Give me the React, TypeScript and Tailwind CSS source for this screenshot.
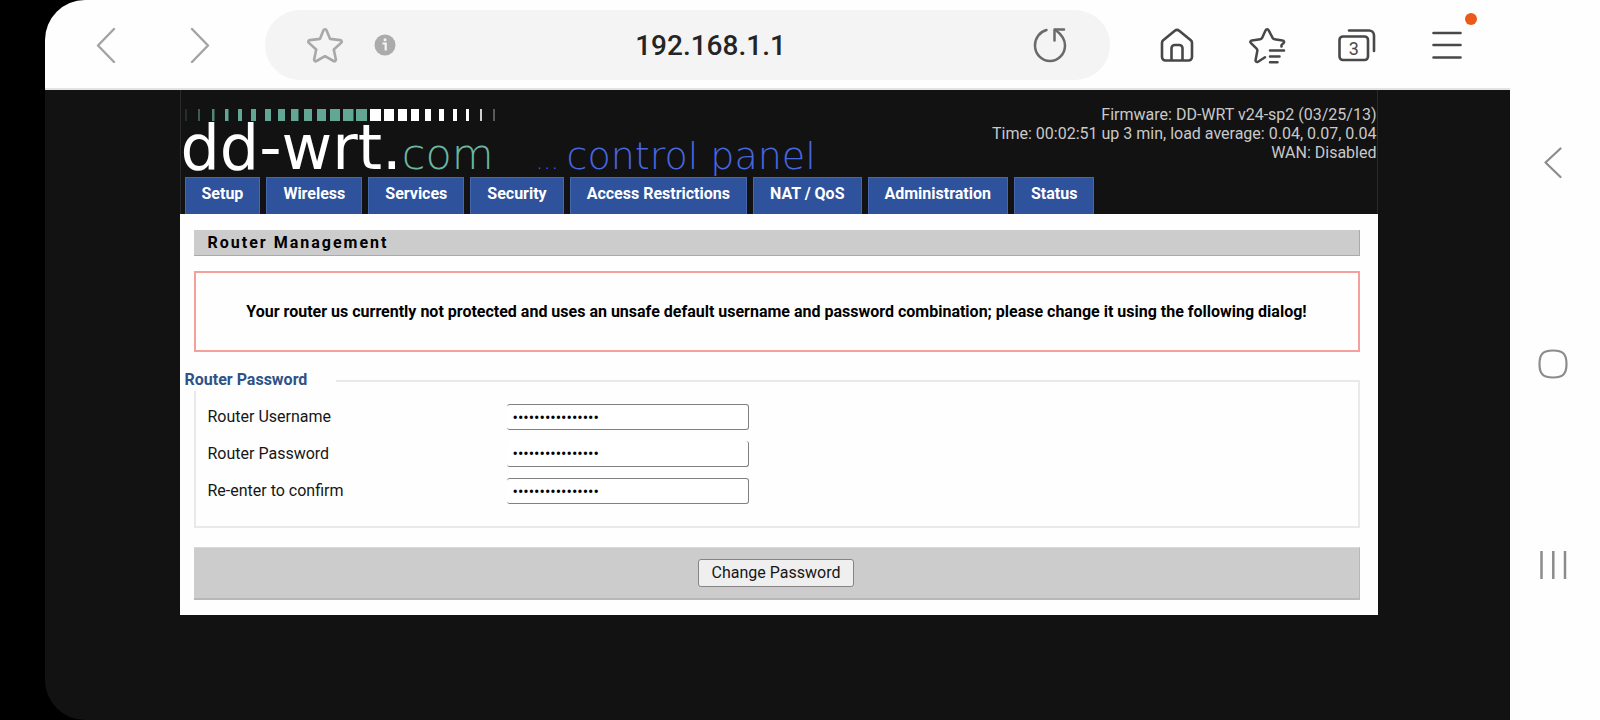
const TABS = [
  "Setup",
  "Wireless",
  "Services",
  "Security",
  "Access Restrictions",
  "NAT / QoS",
  "Administration",
  "Status",
];

const FIELDS = [
  { id: "router-username", label: "Router Username", border: "border-y border-r" },
  { id: "router-password", label: "Router Password", border: "border-b border-r" },
  { id: "router-confirm", label: "Re-enter to confirm", border: "border-y border-r" },
];

const TICKS = [
  { x: 0.5, w: 1, o: 0.4 },
  { x: 13, w: 2, o: 0.5 },
  { x: 27, w: 2.5, o: 0.8 },
  { x: 40, w: 3.5, o: 1 },
  { x: 53, w: 4, o: 1 },
  { x: 66, w: 5, o: 1 },
  { x: 80, w: 6, o: 1 },
  { x: 93, w: 7, o: 1 },
  { x: 106, w: 7.5, o: 1 },
  { x: 119, w: 8, o: 1 },
  { x: 132, w: 9, o: 1 },
  { x: 145, w: 10, o: 1 },
  { x: 158, w: 10.5, o: 1 },
  { x: 171, w: 11, o: 1 },
  { x: 185, w: 11, o: 1 },
  { x: 199, w: 10, o: 1 },
  { x: 213, w: 9, o: 1 },
  { x: 226, w: 8, o: 1 },
  { x: 240, w: 6, o: 1 },
  { x: 254, w: 5, o: 1 },
  { x: 268, w: 4, o: 1 },
  { x: 281, w: 3, o: 1 },
  { x: 295, w: 2, o: 0.8 },
  { x: 308, w: 2, o: 0.3 },
];

const STAR =
  "M18 2.2c.7 0 1.2.4 1.5 1.1l3.6 8.6 10 1.2c1.6.2 2.2 1.7 1 2.8l-7.3 6.6 2 9.8c.3 1.6-1 2.5-2.3 1.7L18 29.2 9.5 34c-1.300.8-2.600-.1-2.300-1.700l2-9.800-7.300-6.600c-1.200-1.100-.6-2.600 1-2.800l10-1.200 3.600-8.600c.3-.7.8-1.100 1.500-1.100z";

function BrowserBar() {
  return (
    <header className="flex h-[90px] shrink-0 items-center border-b-2 border-[#e0e4e2] bg-[#fefefe] pl-3.5 pr-[18px] pt-0.5">
      <button aria-label="Back" className="flex h-16 w-[94px] items-center justify-center">
        <svg width="20" height="36" viewBox="0 0 20 36" fill="none" stroke="#a3a3a3" strokeWidth="2.400" strokeLinecap="round" strokeLinejoin="round">
          <path d="M18 2 2 18.500 18 35" />
        </svg>
      </button>
      <button aria-label="Forward" className="flex h-16 w-[94px] items-center justify-center">
        <svg width="20" height="36" viewBox="0 0 20 36" fill="none" stroke="#a3a3a3" strokeWidth="2.400" strokeLinecap="round" strokeLinejoin="round">
          <path d="M2 2 18 18.500 2 35" />
        </svg>
      </button>

      <div className="ml-[18px] flex h-[70px] min-w-0 flex-1 items-center rounded-full bg-[#f4f4f4] px-[30px]">
        <button aria-label="Bookmark this page" className="flex h-14 w-[60px] shrink-0 items-center justify-center">
          <svg width="36" height="36" viewBox="0 0 36 36" fill="none" stroke="#a8a8a8" strokeWidth="2.600" strokeLinejoin="round">
            <path d={STAR} />
          </svg>
        </button>
        <button aria-label="Site information" className="flex h-14 w-[60px] shrink-0 items-center justify-center">
          <svg width="22" height="22" viewBox="0 0 22 22">
            <circle cx="11" cy="11" r="10.500" fill="#ababab" />
            <circle cx="11" cy="5.800" r="1.500" fill="#f4f4f4" />
            <path d="M8.500 9.500h3.200v7" stroke="#f4f4f4" strokeWidth="2.200" fill="none" />
          </svg>
        </button>
        <input
          aria-label="Address"
          defaultValue="192.168.1.1"
          className="min-w-0 flex-1 bg-transparent pr-3.5 pt-0.5 text-center text-[28px] font-medium leading-9 text-[#252525] outline-none"
        />
        <button aria-label="Reload" className="flex h-14 w-[60px] shrink-0 items-center justify-center">
          <svg width="34" height="36" viewBox="0 0 34 36" fill="none" stroke="#6a6a6a" strokeWidth="2.500" strokeLinecap="round" strokeLinejoin="round">
            <path d="M13.500 3C6.500 5 2 11 2 18.500 2 27 8.500 34 17 34s15-7 15-15.500C32 12 28 7 22.500 3" />
            <path d="M31 2.500H21.500v11" />
          </svg>
        </button>
      </div>

      <nav aria-label="Browser tools" className="ml-[22px] flex">
        <button aria-label="Home" className="flex h-16 w-[90px] items-center justify-center">
          <svg width="34" height="34" viewBox="0 0 34 34" fill="none" stroke="#484848" strokeWidth="2.600" strokeLinejoin="round">
            <path d="M14.800 2.700 3.200 12.300C2.400 13 2 13.800 2 14.800V29a3.500 3.500 0 0 0 3.500 3.500h23A3.500 3.500 0 0 0 32 29V14.800c0-1-.4-1.800-1.200-2.500L19.200 2.700c-1.400-1.100-3-1.100-4.400 0z" />
            <path d="M11.500 32.500V20.200a3.200 3.200 0 0 1 3.200-3.200h4.600a3.200 3.200 0 0 1 3.200 3.200v12.300" />
          </svg>
        </button>
        <button aria-label="Bookmarks" className="flex h-16 w-[90px] items-center justify-center">
          <svg width="38" height="38" viewBox="0 0 38 38" fill="none" stroke="#484848" strokeWidth="2.500" strokeLinecap="round" strokeLinejoin="round">
            <path d="M33.500 20.500c-.3-.8-.1-1.300.4-1.800l1.600-1.600c1.100-1.100.6-2.500-1-2.700l-8-1.200c-1-.1-1.600-.6-2-1.500L20.700 4.400c-.6-1.600-2.500-1.600-3.200 0l-3.300 7.300c-.4.900-1 1.400-2 1.500l-8.200 1.200c-1.600.2-2.200 1.600-1 2.700l5.600 5.500c.7.700.9 1.300.7 2.300L7.600 34c-.3 1.700 1 2.600 2.500 1.700l6.900-4.500" />
            <path d="M22 24.500h14M22 30.500h9.500M22 36.200h7.500" />
          </svg>
        </button>
        <button aria-label="3 open tabs" className="flex h-16 w-[90px] items-center justify-center">
          <svg width="38" height="34" viewBox="0 0 38 34" fill="none" stroke="#484848" strokeWidth="2.600" strokeLinecap="round">
            <rect x="1.500" y="8.500" width="28.500" height="23.500" rx="3.500" />
            <path d="M11 2.500h20a5 5 0 0 1 5 5v15.500" />
            <text x="15.700" y="26.500" textAnchor="middle" fontSize="18" fontFamily="Roboto" fill="#484848" stroke="none">
              3
            </text>
          </svg>
        </button>
        <button aria-label="Menu" className="relative flex h-16 w-[90px] items-center justify-center">
          <svg width="30" height="28" viewBox="0 0 30 28" stroke="#484848" strokeWidth="2.600" strokeLinecap="round">
            <path d="M1.500 2h27M1.500 14h27M1.500 26.500h27" />
          </svg>
          <span className="absolute right-[15px] top-0 size-3 rounded-full bg-[#ea5b1a]" />
        </button>
      </nav>
    </header>
  );
}

function Logo() {
  return (
    <div className="flex flex-col pl-1 pt-[18px]">
      <svg width="312" height="14" viewBox="0 0 312 14" aria-hidden="true">
        {TICKS.map((t, i) => (
          <rect key={t.x} x={t.x} y="1" width={t.w} height="12" fill={i < 14 ? "#62a694" : "#ffffff"} opacity={t.o} />
        ))}
      </svg>
      <div className="-ml-1 flex h-[52px] items-baseline whitespace-nowrap font-['DejaVu_Sans'] leading-[52px]">
        <span className="text-[62px] text-white">dd-wrt.</span>
        <span className="text-[43px] font-extralight text-[#6bb5a1]">com</span>
        <span className="ml-[42px] text-[24px] font-extralight text-[#4767e0]">...</span>
        <span className="ml-2 text-[38px] font-extralight text-[#4767e0]">control panel</span>
      </div>
    </div>
  );
}

function PanelHeader() {
  return (
    <div className="border-x border-[#2a2a2a]">
      <div className="flex h-[87px] justify-between">
        <Logo />
        <div className="pt-[15px] text-right text-base leading-[19px] text-[#c9c9c9]">
          <p>Firmware: DD-WRT v24-sp2 (03/25/13)</p>
          <p>Time: 00:02:51 up 3 min, load average: 0.04, 0.07, 0.04</p>
          <p>WAN: Disabled</p>
        </div>
      </div>
      <nav aria-label="Router sections" className="flex gap-1.5 pl-1">
        {TABS.map((tab) => (
          <a
            key={tab}
            href="#"
            className="h-[37px] border border-b-0 border-[#4667ab] bg-[#2f529d] px-4 pt-[5px] text-base font-bold leading-[22px] text-white"
          >
            {tab}
          </a>
        ))}
      </nav>
    </div>
  );
}

function PasswordForm() {
  return (
    <form className="bg-[#fefefe] pb-[15px] pl-3.5 pr-[18px] pt-4" onSubmit={(e) => e.preventDefault()}>
      <h2 className="h-[26px] border-b border-r border-[#aaa] bg-[#ccc] pl-3.5 text-base font-bold leading-[26px] tracking-[2px] text-black">
        Router Management
      </h2>

      <div className="mt-[15px] flex h-[81px] items-center justify-center border-2 border-[#f4a19e] text-center text-base font-bold text-black">
        Your router us currently not protected and uses an unsafe default username and password combination; please
        change it using the following dialog!
      </div>

      <section className="mt-[15px]" aria-labelledby="password-heading">
        <div className="flex h-6 items-start">
          <h3 id="password-heading" className="-ml-[9px] w-[151px] text-base font-bold leading-[26px] text-[#2f5288]">
            Router Password
          </h3>
          <div className="mt-[13px] h-[11px] flex-1 border-r-2 border-t-2 border-[#e9e9e9]" />
        </div>
        <div className="flex h-[137px] flex-col gap-[11px] border-x-2 border-b-2 border-[#e9e9e9] pl-3 pt-[13px]">
          {FIELDS.map((field) => (
            <div key={field.id} className="flex items-center">
              <label htmlFor={field.id} className="w-[299px] text-base leading-6 text-[#161616]">
                {field.label}
              </label>
              <input
                id={field.id}
                type="password"
                defaultValue="xxxxxxxxxxxxxxxx"
                className={`${field.border} h-[26px] w-[242px] rounded-[3px] border-[#808080] bg-white px-1.5 text-base leading-6 text-black outline-none`}
              />
            </div>
          ))}
        </div>
      </section>

      <div className="mt-[19px] flex h-[53px] items-center justify-center border-b-2 border-r border-t border-b-[#b8b8b8] border-r-[#b8b8b8] border-t-[#d8d8d8] bg-[#ccc]">
        <button
          type="submit"
          className="h-7 rounded-[3px] border border-[#858585] bg-[#efefef] px-[13px] text-base leading-6 text-[#161616]"
        >
          Change Password
        </button>
      </div>
    </form>
  );
}

function SystemNav() {
  return (
    <nav aria-label="System navigation" className="flex w-[90px] shrink-0 flex-col items-center justify-center bg-[#fefefe] pr-1 pt-2">
      <button aria-label="System back" className="flex h-[201px] w-16 items-center justify-center">
        <svg width="20" height="32" viewBox="0 0 20 32" fill="none" stroke="#8c8c8c" strokeWidth="2.200" strokeLinecap="round" strokeLinejoin="round">
          <path d="M17.500 1.500 2.500 15.500 17.500 30" />
        </svg>
      </button>
      <button aria-label="System home" className="flex h-[201px] w-16 items-center justify-center">
        <svg width="30" height="30" viewBox="0 0 30 30" fill="none" stroke="#8c8c8c" strokeWidth="2.200">
          <path d="M15 1.500C25 1.500 28.500 5 28.500 15S25 28.500 15 28.500 1.500 25 1.500 15 5 1.500 15 1.500z" />
        </svg>
      </button>
      <button aria-label="Recent apps" className="flex h-[201px] w-16 items-center justify-center">
        <svg width="28" height="28" viewBox="0 0 28 28" stroke="#8c8c8c" strokeWidth="2.500">
          <path d="M2.500 0v28M14.300 0v28M26 0v28" />
        </svg>
      </button>
    </nav>
  );
}

export default function App() {
  return (
    <div className="flex min-h-screen bg-black font-[Roboto,sans-serif]">
      <div className="ml-[45px] flex min-w-0 flex-1 flex-col overflow-hidden rounded-l-[40px] bg-[#121212]">
        <BrowserBar />
        <main className="pl-0.5">
          <div className="mx-auto max-w-[1198px]">
            <PanelHeader />
            <PasswordForm />
          </div>
        </main>
      </div>
      <SystemNav />
    </div>
  );
}
